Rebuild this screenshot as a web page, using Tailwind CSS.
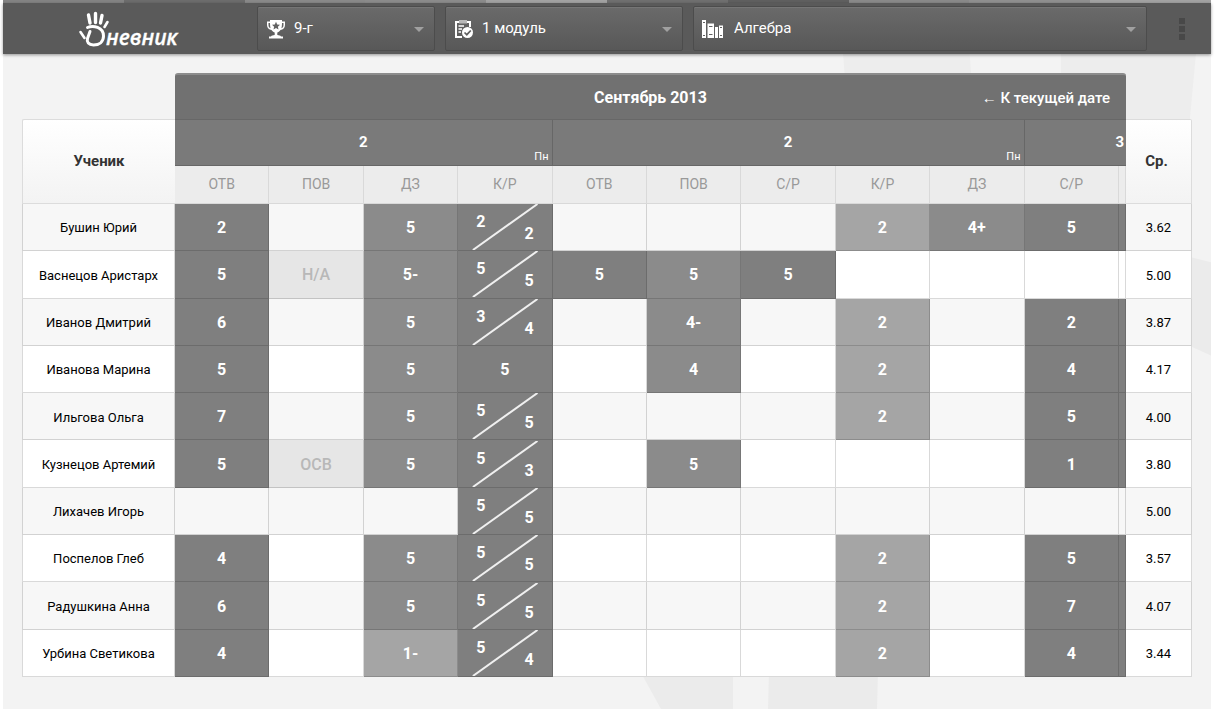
<!DOCTYPE html>
<html lang="ru">
<head>
    <meta charset="UTF-8">
    <meta name="viewport" content="width=device-width, initial-scale=1.0">
    <title>Дневник</title>
    <script src="https://cdn.jsdelivr.net/npm/@tailwindcss/browser@4"></script>
</head>
<body class="bg-white pl-[3px] pr-1 font-['Roboto',sans-serif] text-black">
    <div class="relative bg-[#f3f3f3] pb-8">
        <!-- фон -->
        <svg class="absolute right-0 top-0 h-full w-[600px]" viewBox="0 0 600 708" preserveAspectRatio="none" aria-hidden="true">
            <path fill="#ededed" d="M228 0H355L366 160H240zM450 0H590L575 160H450z"/>
            <path fill="#ebebeb" d="M580 257L600 262V355L580 346zM29 670H122V708H50zM158 670H267L266 708H157z"/>
        </svg>

        <!-- цветная полоска -->
        <div class="relative flex h-[3px]">
            <div class="flex-1 bg-[#848484]"></div>
            <div class="flex-1 bg-[#6d6d6d]"></div>
            <div class="flex-1 bg-[#8a8a8a]"></div>
            <div class="flex-1 bg-[#8c8c8c]"></div>
            <div class="flex-1 bg-[#a3a3a3]"></div>
            <div class="flex-1 bg-[#707070]"></div>
            <div class="flex-1 bg-[#606060]"></div>
            <div class="flex-1 bg-[#8a8a8a]"></div>
            <div class="flex-1 bg-[#909090]"></div>
            <div class="flex-1 bg-[#a3a3a3]"></div>
        </div>

        <header class="relative flex h-[51px] items-center gap-[10px] bg-[#5a5a5a] shadow-[0_1px_3px_rgba(0,0,0,0.4)]">
            <a href="#" class="flex w-[244px] pl-[75px] text-white" aria-label="Дневник">
                <svg class="h-[47px] w-[110px]" viewBox="0 0 110 47" aria-hidden="true">
                    <g fill="none" stroke="currentColor" stroke-linecap="round">
                        <path stroke-width="3.4" d="M10.500 10L12 18M17.500 8.500L17.500 17.500M24 10.500L22.500 18"/>
                        <path stroke-width="2.600" d="M29.500 17L26.500 22M2.500 27L6.500 33"/>
                        <path stroke-width="3" stroke-linejoin="round" d="M9.500 22.500C15 20 25.500 22 25.500 31C25.500 37 21 40 15.500 40C10.500 40 8.500 37 9.500 33.500L12 26.500"/>
                    </g>
                    <text x="28" y="40" fill="currentColor" stroke="currentColor" stroke-width="0.300" font-family="Open Sans, sans-serif" font-style="italic" font-weight="600" font-size="21">невник</text>
                </svg>
            </a>

            <div class="relative w-[178px]">
                <svg class="pointer-events-none absolute left-[9px] top-[13px] h-[20px] w-[20px] text-white" viewBox="0 0 20 20" aria-hidden="true">
                    <path fill="currentColor" d="M4 1H16V2.500H19V6C19 9 17 10.500 14.500 11C13.500 12.500 12 13.300 11.300 13.500V16C13 16.200 14.500 16.500 15 17.500H17V19.500H3V17.500H5C5.500 16.500 7 16.200 8.700 16V13.500C8 13.300 6.500 12.500 5.500 11C3 10.500 1 9 1 6V2.500H4zM2.500 4V6C2.500 7.800 3.300 8.800 4.600 9.300C4.200 8 4 6 4 4zM17.500 4H16C16 6 15.800 8 15.400 9.300C16.700 8.800 17.500 7.800 17.500 6z"/>
                    <path fill="#626262" d="M10 2.800L11.200 5.500L14 5.800L11.900 7.700L12.500 10.500L10 9L7.500 10.500L8.100 7.700L6 5.800L8.800 5.500z"/>
                </svg>
                <select aria-label="Класс" class="block h-[45px] w-full appearance-none rounded-[2px] border border-[#4c4c4c] bg-linear-to-b from-[#6a6a6a] to-[#585858] pl-[36px] pr-8 text-[15px] text-white shadow-[inset_0_1px_0_#767676]">
                    <option>9-г</option>
                </select>
                <span class="pointer-events-none absolute right-[11px] top-[21px] border-x-[5px] border-t-[5px] border-x-transparent border-t-[#a0a0a0]"></span>
            </div>

            <div class="relative w-[238px]">
                <svg class="pointer-events-none absolute left-[9px] top-[13px] h-[20px] w-[20px] text-white" viewBox="0 0 20 20" aria-hidden="true">
                    <path fill="none" stroke="currentColor" stroke-width="2" d="M16 8V3H2V18H8"/>
                    <path fill="#b8b8b8" d="M5 1H13V4.500H5z"/>
                    <path stroke="currentColor" stroke-width="1.500" d="M4.500 7H10M4.500 10H8M4.500 13H7"/>
                    <circle cx="13.500" cy="13.500" r="5.500" fill="currentColor"/>
                    <path fill="none" stroke="#606060" stroke-width="1.700" d="M10.500 13.500L12.800 15.700L16.800 11.500"/>
                </svg>
                <select aria-label="Модуль" class="block h-[45px] w-full appearance-none rounded-[2px] border border-[#4c4c4c] bg-linear-to-b from-[#6a6a6a] to-[#585858] pl-[36px] pr-8 text-[15px] text-white shadow-[inset_0_1px_0_#767676]">
                    <option>1 модуль</option>
                </select>
                <span class="pointer-events-none absolute right-[11px] top-[21px] border-x-[5px] border-t-[5px] border-x-transparent border-t-[#a0a0a0]"></span>
            </div>

            <div class="relative flex-1">
                <svg class="pointer-events-none absolute left-[9px] top-[13px] h-[20px] w-[22px] text-white" viewBox="0 0 22 20" aria-hidden="true">
                    <path fill="currentColor" d="M0 1H4V19H0zM5.500 4.500H12V19H5.500zM13 8H16V19H13zM17 6.500H21V19H17z"/>
                    <path stroke="#626262" d="M1 3.500H3M1 16.500H3M7 7.500H10.500M7 15.500H10.500M18 8.500H20M18 16.500H20"/>
                </svg>
                <select aria-label="Предмет" class="block h-[45px] w-full appearance-none rounded-[2px] border border-[#4c4c4c] bg-linear-to-b from-[#6a6a6a] to-[#585858] pl-[40px] pr-8 text-[15px] text-white shadow-[inset_0_1px_0_#767676]">
                    <option>Алгебра</option>
                </select>
                <span class="pointer-events-none absolute right-[11px] top-[21px] border-x-[5px] border-t-[5px] border-x-transparent border-t-[#a0a0a0]"></span>
            </div>

            <button class="flex w-[54px] flex-col items-center gap-[2px] pr-1" aria-label="Меню">
                <span class="size-[6px] bg-[#484848]"></span>
                <span class="size-[6px] bg-[#484848]"></span>
                <span class="size-[6px] bg-[#484848]"></span>
            </button>
        </header>

        <main class="relative px-[19px] pt-[19px]">
            <table class="h-[604px] w-full table-fixed border-separate border-spacing-0 text-center">
                <colgroup>
                    <col class="w-[153px]">
                    <col span="10">
                    <col class="w-[7px]">
                    <col class="w-[66px]">
                </colgroup>
                <thead>
                    <tr class="h-[46px]">
                        <td></td>
                        <th colspan="11" class="rounded-t-[3px] border-t-2 border-[#8c8c8c] bg-[#717171] px-4 pt-[2px] text-white">
                            <div class="grid grid-cols-[1fr_auto_1fr] items-center">
                                <span class="col-start-2 text-[16px] font-bold">Сентябрь 2013</span>
                                <a href="#" class="justify-self-end text-[15px] font-medium">← К текущей дате</a>
                            </div>
                        </th>
                        <td></td>
                    </tr>
                    <tr class="h-[47px] text-[15px] font-bold text-white">
                        <th rowspan="2" class="rounded-tl-[2px] border border-r-0 border-[#dcdcdc] bg-linear-to-b from-white to-[#f3f3f3] text-[#333]">Ученик</th>
                        <th colspan="4" class="relative border-y border-r border-black/15 bg-[#7a7a7a]">2<span class="absolute bottom-0 right-[3px] text-[11px] font-normal">Пн</span></th>
                        <th colspan="5" class="relative border-y border-r border-black/15 bg-[#7a7a7a]">2<span class="absolute bottom-0 right-[3px] text-[11px] font-normal">Пн</span></th>
                        <th colspan="2" class="border-y border-black/15 bg-[#7a7a7a] pr-[2px] text-right">3</th>
                        <th rowspan="2" class="rounded-tr-[2px] border border-l-0 border-[#dcdcdc] bg-linear-to-b from-white to-[#f3f3f3] pr-[4px] text-[#333]">Ср.</th>
                    </tr>
                    <tr id="kinds" class="h-[38px] text-[14px] text-[#999]"></tr>
                </thead>
                <tbody id="marks"></tbody>
            </table>
        </main>
    </div>

    <script>
        const kinds = ['ОТВ', 'ПОВ', 'ДЗ', 'К/Р', 'ОТВ', 'ПОВ', 'С/Р', 'К/Р', 'ДЗ', 'С/Р', ''];

        // оценки по столбцам, "2/4" - двойная оценка
        const pupils = [
            ['Бушин Юрий', ['2', '', '5', '2/2', '', '', '', '2', '4+', '5'], '3.62'],
            ['Васнецов Аристарх', ['5', 'Н/А', '5-', '5/5', '5', '5', '5', '', '', ''], '5.00'],
            ['Иванов Дмитрий', ['6', '', '5', '3/4', '', '4-', '', '2', '', '2'], '3.87'],
            ['Иванова Марина', ['5', '', '5', '5', '', '4', '', '2', '', '4'], '4.17'],
            ['Ильгова Ольга', ['7', '', '5', '5/5', '', '', '', '2', '', '5'], '4.00'],
            ['Кузнецов Артемий', ['5', 'ОСВ', '5', '5/3', '', '5', '', '', '', '1'], '3.80'],
            ['Лихачев Игорь', ['', '', '', '5/5', '', '', '', '', '', ''], '5.00'],
            ['Поспелов Глеб', ['4', '', '5', '5/5', '', '', '', '2', '', '5'], '3.57'],
            ['Радушкина Анна', ['6', '', '5', '5/5', '', '', '', '2', '', '7'], '4.07'],
            ['Урбина Светикова', ['4', '', '1-', '5/4', '', '', '', '2', '', '4'], '3.44']
        ];

        document.getElementById('kinds').innerHTML = kinds
            .map(k => `<th class="border-b border-r border-[#d9d9d9] bg-[#ececec] font-normal">${k}</th>`)
            .join('');

        // цвет клетки зависит от вида работы и оценки
        function cellColor(mark, col) {
            if (!mark) return '';
            if (mark === 'Н/А' || mark === 'ОСВ') return 'bg-[#e6e6e6] text-[#b8b8b8] font-medium';
            if (col === 7 || mark === '1-') return 'bg-[#a5a5a5] text-white font-bold';
            if (col === 2 || col === 5 || col === 8) return 'bg-[#8b8b8b] text-white font-bold';
            return 'bg-[#7f7f7f] text-white font-bold';
        }

        function markCell(mark, col) {
            const parts = mark.split('/');
            if (parts.length === 2 && mark !== 'Н/А') {
                return `<td class="border-b border-r border-black/15 p-0 text-[16px] ${cellColor(mark, col)}">
                    <div class="relative flex h-[46px] items-center justify-between px-[18px]">
                        <svg class="absolute inset-0 size-full" viewBox="0 0 94 46" preserveAspectRatio="none"><path stroke="#f0f0f0" stroke-width="2" d="M15 46L80 0"/></svg>
                        <span class="relative pb-[10px]">${parts[0]}</span><span class="relative pt-[14px]">${parts[1]}</span>
                    </div>
                </td>`;
            }
            return `<td class="border-b border-r border-black/15 pt-[2px] text-[16px] ${cellColor(mark, col)}">${mark}</td>`;
        }

        document.getElementById('marks').innerHTML = pupils.map(([name, marks, avg]) => `
            <tr class="h-[47px] odd:bg-[#f7f7f7] even:bg-white">
                <th class="border-x border-b border-black/15 pt-[2px] text-[13px] font-normal">${name}</th>
                ${marks.map(markCell).join('')}
                <td class="border-b border-r border-black/15 ${cellColor(marks[9], 9)}"></td>
                <td class="border-b border-r border-black/15 pt-[2px] text-[13px]">${avg}</td>
            </tr>`).join('');
    </script>
</body>
</html>
